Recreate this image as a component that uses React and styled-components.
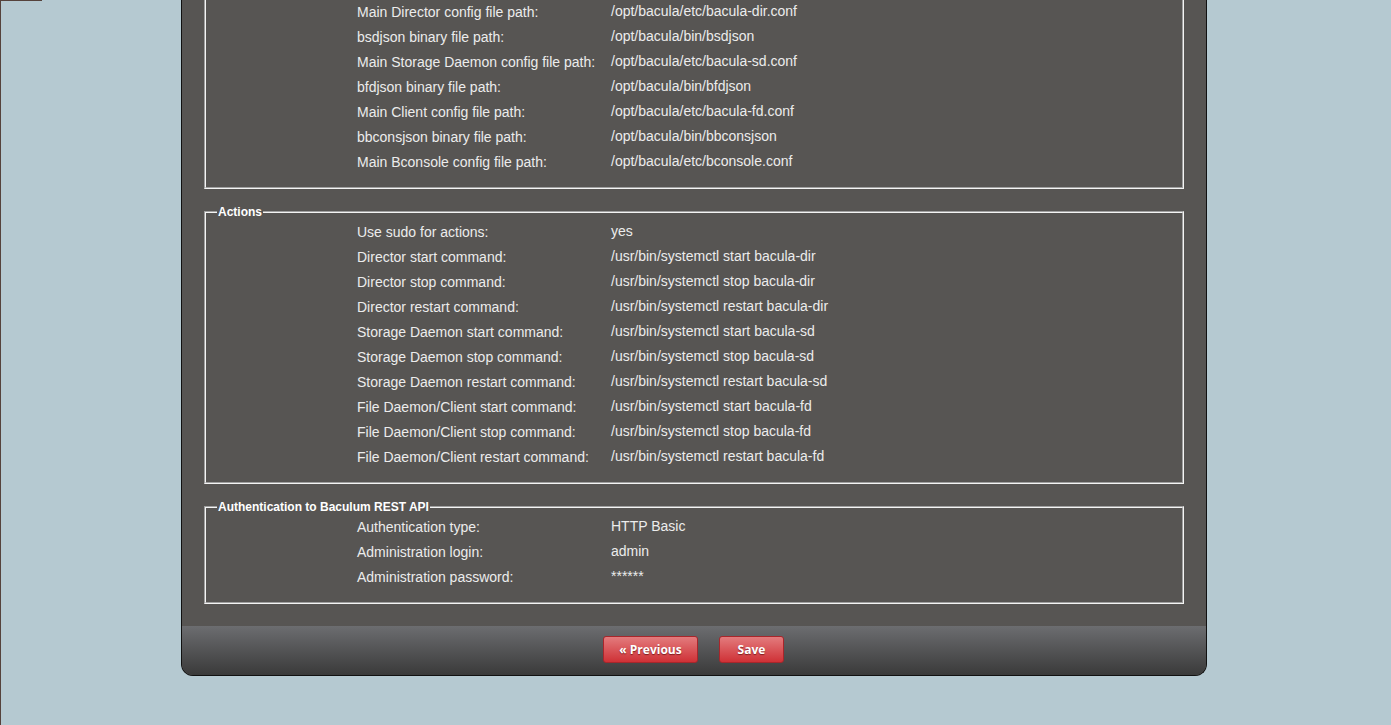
import React from "react";
import styled, { createGlobalStyle } from "styled-components";

const Global = createGlobalStyle`
  html, body { margin: 0; padding: 0; background: #b5c9d1; overflow: hidden; }
  body { font-family: "Liberation Sans", Arial, sans-serif; }
`;

const Page = styled.div`
  position: relative;
  display: flow-root;
  height: 725px;
  border-left: 1px solid #55423c;
  box-sizing: border-box;
`;

const TopMark = styled.div`
  position: absolute;
  top: 0;
  left: 0;
  width: 41px;
  height: 1px;
  background: #55423c;
  z-index: 1;
`;

const Panel = styled.div`
  width: 1024px;
  margin: -15px 0 0 180px;
  background: #575553;
  border: 1px solid #111;
  border-top: none;
  border-radius: 0 0 12px 12px;
  overflow: hidden;
  display: flex;
  flex-direction: column;
`;

const Body = styled.div`
  padding: 0 22px 22px 22px;
  display: flex;
  flex-direction: column;
  gap: 16px;
`;

const Fieldset = styled.fieldset`
  margin: 0;
  padding: ${(p) => (p.$noLegend ? "12px" : "0")} 0 13px 0;
  border: 2px groove #f4f4f4;
  min-width: 0;
`;

const Legend = styled.legend`
  margin-left: 11px;
  padding: 0 1px;
  font-size: 12px;
  font-weight: bold;
  color: #fff;
  line-height: 14px;
`;

const Row = styled.div`
  display: grid;
  grid-template-columns: 254px 1fr;
  padding-left: 151px;
  height: 25px;
  align-items: center;
  font-size: 14px;
  color: #ececec;
`;

const Value = styled.span`
  position: relative;
  top: -1px;
`;

const Footer = styled.div`
  height: 49px;
  background: linear-gradient(#6c6d70, #3a3a3a);
  display: flex;
  justify-content: center;
  align-items: center;
  gap: 21px;
  padding-right: 1px;
`;

const Button = styled.button`
  height: 27px;
  min-width: ${(p) => p.$w}px;
  padding: 0 14px;
  border: 1px solid #a8262b;
  border-radius: 3px;
  background: linear-gradient(#e37b7d, #cf3136);
  color: #fff;
  font-family: "Open Sans", "DejaVu Sans", sans-serif;
  font-weight: bold;
  font-size: 12px;
  text-shadow: 0 1px 1px rgba(70, 0, 0, 0.6);
  cursor: pointer;
  margin-top: -2px;
`;

const sections = [
  {
    legend: null,
    rows: [
      ["Main Director config file path:", "/opt/bacula/etc/bacula-dir.conf"],
      ["bsdjson binary file path:", "/opt/bacula/bin/bsdjson"],
      ["Main Storage Daemon config file path:", "/opt/bacula/etc/bacula-sd.conf"],
      ["bfdjson binary file path:", "/opt/bacula/bin/bfdjson"],
      ["Main Client config file path:", "/opt/bacula/etc/bacula-fd.conf"],
      ["bbconsjson binary file path:", "/opt/bacula/bin/bbconsjson"],
      ["Main Bconsole config file path:", "/opt/bacula/etc/bconsole.conf"],
    ],
  },
  {
    legend: "Actions",
    rows: [
      ["Use sudo for actions:", "yes"],
      ["Director start command:", "/usr/bin/systemctl start bacula-dir"],
      ["Director stop command:", "/usr/bin/systemctl stop bacula-dir"],
      ["Director restart command:", "/usr/bin/systemctl restart bacula-dir"],
      ["Storage Daemon start command:", "/usr/bin/systemctl start bacula-sd"],
      ["Storage Daemon stop command:", "/usr/bin/systemctl stop bacula-sd"],
      ["Storage Daemon restart command:", "/usr/bin/systemctl restart bacula-sd"],
      ["File Daemon/Client start command:", "/usr/bin/systemctl start bacula-fd"],
      ["File Daemon/Client stop command:", "/usr/bin/systemctl stop bacula-fd"],
      ["File Daemon/Client restart command:", "/usr/bin/systemctl restart bacula-fd"],
    ],
  },
  {
    legend: "Authentication to Baculum REST API",
    rows: [
      ["Authentication type:", "HTTP Basic"],
      ["Administration login:", "admin"],
      ["Administration password:", "******"],
    ],
  },
];

export default function App() {
  return (
    <>
      <Global />
      <Page>
        <TopMark />
        <Panel>
          <Body>
            {sections.map((s, i) => (
              <Fieldset key={i} $noLegend={!s.legend}>
                {s.legend && <Legend>{s.legend}</Legend>}
                {s.rows.map(([l, v]) => (
                  <Row key={l}>
                    <span>{l}</span>
                    <Value>{v}</Value>
                  </Row>
                ))}
              </Fieldset>
            ))}
          </Body>
          <Footer>
            <Button $w={95}>« Previous</Button>
            <Button $w={65}>Save</Button>
          </Footer>
        </Panel>
      </Page>
    </>
  );
}
